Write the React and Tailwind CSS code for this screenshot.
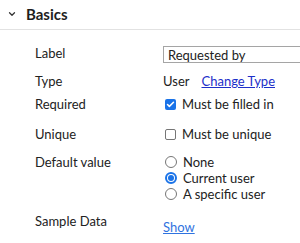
import { Check, ChevronDown } from "lucide-react";

/* ================== UI ================== */
function Row({ label, children, className = "", labelClass = "" }) {
  return (
    <div className={`flex ${className}`}>
      <div className={`w-[128px] shrink-0 ${labelClass}`}>{label}</div>
      <div className="flex-1 min-w-0">{children}</div>
    </div>
  );
}

function Checkbox({ checked, label }) {
  return (
    <div className="flex items-center gap-[6px] h-[16px]">
      {checked ? (
        <span className="w-[11px] h-[11px] rounded-[2px] bg-[#1a73e8] flex items-center justify-center ml-[2px]">
          <Check size={9} strokeWidth={4} color="white" />
        </span>
      ) : (
        <span className="w-[11px] h-[11px] rounded-[2px] border border-[#767676] ml-[2px]" />
      )}
      <span>{label}</span>
    </div>
  );
}

function Radio({ checked, label }) {
  return (
    <div className="flex items-center gap-[6px] h-[16px]">
      {checked ? (
        <span className="w-[12px] h-[12px] rounded-full border-2 border-[#1a73e8] flex items-center justify-center ml-[2px]">
          <span className="w-[6px] h-[6px] rounded-full bg-[#1a73e8]" />
        </span>
      ) : (
        <span className="w-[12px] h-[12px] rounded-full border border-[#767676] ml-[2px]" />
      )}
      <span>{label}</span>
    </div>
  );
}

/* ================== APP ================== */
export default function App() {
  return (
    <div
      className="w-[300px] h-[243px] overflow-hidden bg-white text-[#222] text-[13px] leading-[16px]"
      style={{ fontFamily: "Lato, 'Noto Sans', sans-serif" }}
    >
      <div className="h-[30px] flex items-center pb-[2px] border-b border-[#e2e2e2]">
        <ChevronDown size={10} strokeWidth={3} className="ml-[7px] text-[#333]" />
        <span className="ml-[9px] text-[15px] font-bold text-[#1e1e1e]">Basics</span>
      </div>

      <div className="pl-[35px]">
        <Row label="Label" className="mt-[16px] items-center h-[17px]" labelClass="pb-[4px]">
          <div className="w-[160px] h-[17px] border border-[#a5a5a5] pl-[4px] flex items-center">
            Requested by
          </div>
        </Row>

        <Row label="Type" className="mt-[10px] h-[16px] items-center">
          <div className="flex items-center">
            <span>User</span>
            <a href="#" className="ml-[12px] text-[#1d2fc9] underline">
              Change Type
            </a>
          </div>
        </Row>

        <Row label="Required" className="mt-[7px] h-[16px] items-center">
          <Checkbox checked label="Must be filled in" />
        </Row>

        <Row label="Unique" className="mt-[14px] h-[16px] items-center">
          <Checkbox label="Must be unique" />
        </Row>

        <Row label="Default value" className="mt-[12px] items-start" labelClass="h-[16px]">
          <Radio label="None" />
          <Radio checked label="Current user" />
          <Radio label="A specific user" />
        </Row>

        <Row label="Sample Data" className="mt-[11px] items-start">
          <a href="#" className="block mt-[6px] text-[#2f73e0] underline">
            Show
          </a>
        </Row>
      </div>
    </div>
  );
}
